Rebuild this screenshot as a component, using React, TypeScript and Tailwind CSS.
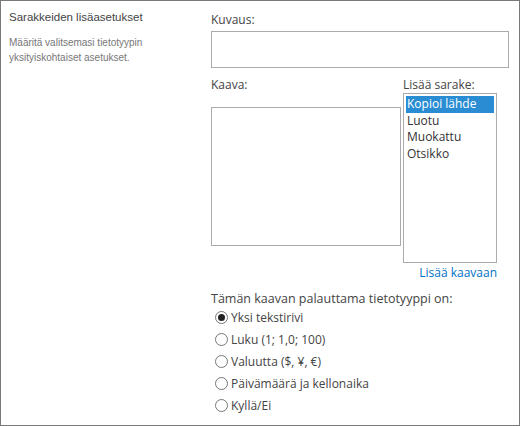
import React from "react";

const font = { fontFamily: '"Open Sans", "Noto Sans", sans-serif' };
const sideFont = { fontFamily: '"Liberation Sans", Arial, sans-serif' };

const options = [
  "Yksi tekstirivi",
  "Luku (1; 1,0; 100)",
  "Valuutta ($, ¥, €)",
  "Päivämäärä ja kellonaika",
  "Kyllä/Ei",
];

const columns = ["Kopioi lähde", "Luotu", "Muokattu", "Otsikko"];

function Radio({ checked }: { checked?: boolean }) {
  return (
    <span className="w-[13px] h-[13px] rounded-full border border-[#777] bg-white flex items-center justify-center shrink-0">
      {checked && <span className="w-[7px] h-[7px] rounded-full bg-[#222]" />}
    </span>
  );
}

export default function App() {
  return (
    <div
      className="w-[520px] h-[426px] border border-[#7a7a7a] bg-white flex text-[#444] overflow-hidden"
      style={font}
    >
      <div className="w-[210px] pl-[8px] pt-[8px]" style={sideFont}>
        <div className="text-[11.5px] leading-[16px] text-[#444]">Sarakkeiden lisäasetukset</div>
        <div className="mt-[10px] text-[10px] leading-[15px] text-[#777] w-[160px]">
          Määritä valitsemasi tietotyypin yksityiskohtaiset asetukset.
        </div>
      </div>

      <div className="flex-1 pt-[10px]">
        <div className="text-[12px] leading-[17px]">Kuvaus:</div>
        <div className="mt-[3px] w-[298px] h-[37px] border border-[#ababab]" />

        <div className="mt-[8px] flex">
          <div className="w-[192px]">
            <div className="text-[12px] leading-[17px]">Kaava:</div>
            <div className="mt-[14px] w-[190px] h-[139px] border border-[#ababab]" />
          </div>
          <div className="w-[94px]">
            <div className="text-[12px] leading-[17px]">Lisää sarake:</div>
            <div className="w-[94px] h-[170px] border border-[#ababab] p-[2px]">
              {columns.map((c, i) => (
                <div
                  key={c}
                  className={
                    i === 0
                      ? "bg-[#2a8dd4] text-white text-[12px] leading-[16.5px] pl-[1px]"
                      : "text-[12px] leading-[16.5px] pl-[1px] text-[#333]"
                  }
                >
                  {c}
                </div>
              ))}
            </div>
            <div className="mt-[1px] text-right text-[12px] leading-[17px] text-[#0072c6] whitespace-nowrap">
              Lisää kaavaan
            </div>
          </div>
        </div>

        <div className="mt-[9px] text-[12.5px] leading-[17px]">Tämän kaavan palauttama tietotyyppi on:</div>
        <div className="-mt-[1px] flex flex-col">
          {options.map((o, i) => (
            <div key={o} className="h-[22px] flex items-center gap-[3px] pl-[4px]">
              <Radio checked={i === 0} />
              <span className="text-[12px] leading-[17px]">{o}</span>
            </div>
          ))}
        </div>
      </div>
    </div>
  );
}
